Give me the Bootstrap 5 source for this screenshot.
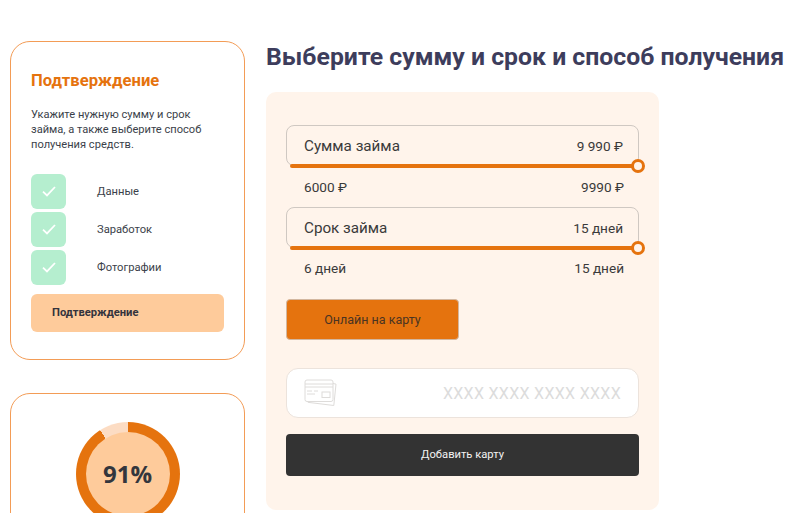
<!DOCTYPE html>
<html lang="ru">
<head>
<meta charset="utf-8">
<title>Подтверждение</title>
<link href="https://cdn.jsdelivr.net/npm/bootstrap@5.3.0/dist/css/bootstrap.min.css" rel="stylesheet">
<style>
html,body{height:513px;overflow:hidden;background:#fff}
body{font-family:Roboto,"Liberation Sans",sans-serif;color:#33333d}
.page-wrap{padding:41px 0 0 10px;gap:21px}
.side-col{width:235px;flex:none;gap:33px}
.side-card{border:1px solid #f39c56;border-radius:20px;background:#fff;padding:27px 20px}
.steps-card{height:319px}
.side-title{font-size:16.6px;line-height:24px;font-weight:700;color:#e5730e;margin:0 0 14px}
.side-text{font-size:11.1px;line-height:15px;color:#3b3f4a;margin:0 0 22px}
.step-row{height:38px}
.step-box{width:35px;height:35px;border-radius:6px;background:#b5eecf;flex:none}
.step-label{font-size:11.2px;line-height:35px;color:#3b3f4a;margin-left:31px}
.step-current{height:38px;margin-top:6px;width:193px;border-radius:6px;background:#fecb9b;padding-left:21px;font-size:11.2px;font-weight:700;color:#33333d}
.donut-card{height:200px;padding-top:28px;overflow:hidden}
.donut{width:104px;height:104px;border-radius:50%;background:conic-gradient(#e5730e 0 327.6deg,#fcdcc3 327.6deg 360deg)}
.donut-inner{width:84px;height:84px;border-radius:50%;background:#fecb9b;font-family:"Open Sans",sans-serif;font-size:24px;font-weight:700;color:#33363d}
.main-title{font-size:24.8px;line-height:32px;font-weight:700;color:#3d3d5c;margin:0 0 19px;white-space:nowrap}
.form-panel{width:393px;height:418px;background:#fff4eb;border-radius:10px;padding:33px 20px}
.range-box{height:41px;border:1px solid #cfc8c2;border-radius:8px;padding:1px 15px 0 17px;position:relative}
.range-name{font-size:15.2px;color:#3a3a3a}
.range-val{font-size:13.6px;color:#3a3a3a}
.range-fill{position:absolute;left:3px;right:0;bottom:-3px;height:4px;background:#e5730e;border-radius:2px}
.range-knob{position:absolute;right:-7px;top:-5px;width:14px;height:14px;border-radius:50%;background:#fff4eb;border:3px solid #e5730e}
.range-ends{font-size:13.6px;color:#3a3a3a;height:41px;padding:1px 15px 0 18px}
.range-ends-last{height:51px;padding-top:0;padding-bottom:11px}
.online-btn{width:173px;height:41px;background:#e5730e;border:1px solid #d3b79f;border-radius:4px;font-size:12.5px;color:#4a3322;padding:2px 0 0}
.online-btn:hover{background:#e5730e;color:#4a3322}
.card-field{height:50px;margin-top:28px;background:#fff;border:1px solid #ece3dc;border-radius:12px;padding:0 17px}
.card-mask{font-size:16px;letter-spacing:.3px;color:#dcdcdc;padding-top:1px}
.add-btn{height:42px;margin-top:16px;background:#333;border:0;border-radius:4px;font-size:11.2px;color:#f2f2f2;padding-top:7px}
.add-btn:hover{background:#333;color:#f2f2f2}
</style>
</head>
<body>
<div class="page-wrap d-flex align-items-start">
  <div class="side-col d-flex flex-column">
    <div class="side-card steps-card">
      <h2 class="side-title">Подтверждение</h2>
      <p class="side-text">Укажите нужную сумму и срок займа, а также выберите способ получения средств.</p>
      <div class="step-row d-flex align-items-start">
        <div class="step-box d-flex align-items-center justify-content-center">
          <svg width="14" height="11" viewBox="0 0 14 11" fill="none" stroke="#fff" stroke-width="1.8"><path d="M1 5.6 5 9.4 13 1"/></svg>
        </div>
        <span class="step-label">Данные</span>
      </div>
      <div class="step-row d-flex align-items-start">
        <div class="step-box d-flex align-items-center justify-content-center">
          <svg width="14" height="11" viewBox="0 0 14 11" fill="none" stroke="#fff" stroke-width="1.8"><path d="M1 5.6 5 9.4 13 1"/></svg>
        </div>
        <span class="step-label">Заработок</span>
      </div>
      <div class="step-row d-flex align-items-start">
        <div class="step-box d-flex align-items-center justify-content-center">
          <svg width="14" height="11" viewBox="0 0 14 11" fill="none" stroke="#fff" stroke-width="1.8"><path d="M1 5.6 5 9.4 13 1"/></svg>
        </div>
        <span class="step-label">Фотографии</span>
      </div>
      <div class="step-current d-flex align-items-center">Подтверждение</div>
    </div>
    <div class="side-card donut-card d-flex justify-content-center align-items-start">
      <div class="donut d-flex align-items-center justify-content-center flex-shrink-0">
        <div class="donut-inner d-flex align-items-center justify-content-center">91%</div>
      </div>
    </div>
  </div>
  <div class="flex-shrink-0">
    <h1 class="main-title">Выберите сумму и срок и способ получения</h1>
    <div class="form-panel">
      <div class="range-box d-flex align-items-center justify-content-between">
        <span class="range-name">Сумма займа</span><span class="range-val">9 990 ₽</span>
        <div class="range-fill"><div class="range-knob"></div></div>
      </div>
      <div class="range-ends d-flex align-items-center justify-content-between"><span>6000 ₽</span><span>9990 ₽</span></div>
      <div class="range-box d-flex align-items-center justify-content-between">
        <span class="range-name">Срок займа</span><span class="range-val">15 дней</span>
        <div class="range-fill"><div class="range-knob"></div></div>
      </div>
      <div class="range-ends range-ends-last d-flex align-items-center justify-content-between"><span>6 дней</span><span>15 дней</span></div>
      <button type="button" class="btn online-btn d-block">Онлайн на карту</button>
      <div class="card-field d-flex align-items-center justify-content-between">
        <svg width="33" height="28" viewBox="0 0 33 28" fill="none" stroke="#dedcda" stroke-width="1"><path d="M29 4.5l3 .6-2.2 21.4-26-3.2"/><rect x="1" y="1" width="28" height="21.5" rx="2"/><path d="M1 5h28M1 8h28" /><path d="M3 12h5M10 12h4M3 15h8" /><rect x="18" y="13" width="8" height="5.5"/></svg>
        <span class="card-mask">XXXX XXXX XXXX XXXX</span>
      </div>
      <button type="button" class="btn add-btn w-100 d-block">Добавить карту</button>
    </div>
  </div>
</div>
<script src="https://cdn.jsdelivr.net/npm/bootstrap@5.3.0/dist/js/bootstrap.bundle.min.js"></script>
</body>
</html>
